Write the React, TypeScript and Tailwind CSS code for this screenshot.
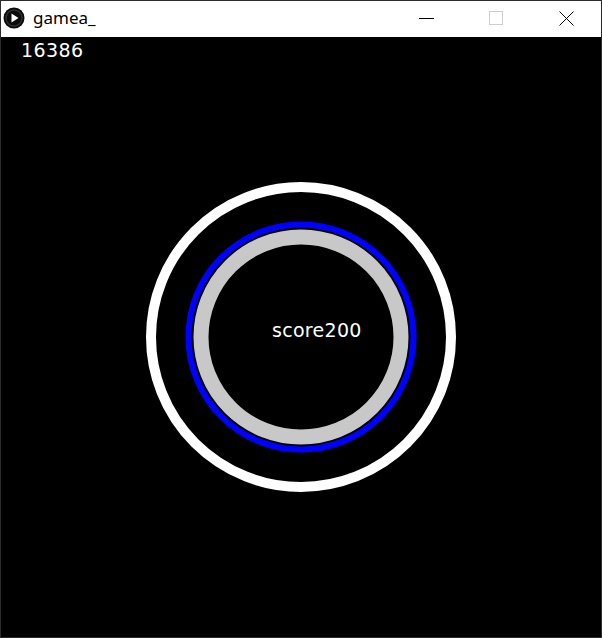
import React from "react";

function ProcessingIcon() {
  return (
    <svg width="22" height="22" viewBox="0 0 22 22">
      <circle cx="11" cy="11" r="10.5" fill="#0a0a0a" />
      <circle cx="11" cy="11" r="8" fill="none" stroke="#2e2e2e" strokeWidth="1.5" />
      <path d="M8.5 6.5 L15.5 11 L8.5 15.5 Z" fill="#ffffff" />
    </svg>
  );
}

function TitleBar() {
  return (
    <div className="flex h-[36px] bg-white items-start">
      <div className="ml-[2px] mt-[6px]">
        <ProcessingIcon />
      </div>
      <span
        className="ml-[8px] mt-[6px] text-[17px] leading-[21px] text-black"
        style={{ fontFamily: '"Noto Sans", "Liberation Sans", sans-serif' }}
      >
        gamea_
      </span>
      <div className="flex-1" />
      <div className="w-[70px] h-full flex justify-center">
        <div className="mt-[17px] w-[15px] h-px bg-black" />
      </div>
      <div className="w-[70px] h-full flex justify-center">
        <div className="mt-[10px] w-[14px] h-[14px] border border-[#cccccc]" />
      </div>
      <div className="w-[70px] h-full flex justify-center">
        <svg className="mt-[10px]" width="15" height="15" viewBox="0 0 15 15">
          <path d="M0.5 0.5 L14.5 14.5 M14.5 0.5 L0.5 14.5" stroke="#000" strokeWidth="1" />
        </svg>
      </div>
    </div>
  );
}

export default function App() {
  const millis = 16386;
  const score = 200;
  const textFont = { fontFamily: '"DejaVu Sans", "Liberation Sans", sans-serif' };

  return (
    <div className="w-[602px] h-[638px] border border-[#2b2b2b] flex flex-col bg-black overflow-hidden">
      <TitleBar />
      <div className="relative w-[600px] h-[600px] bg-black">
        <svg width="600" height="600" viewBox="0 0 600 600" className="block">
          <circle cx="300" cy="300" r="150" fill="none" stroke="#ffffff" strokeWidth="10" />
          <circle cx="300" cy="300" r="112.5" fill="none" stroke="#0000ff" strokeWidth="6" />
          <circle cx="300" cy="300" r="100" fill="none" stroke="#c8c8c8" strokeWidth="15" />
        </svg>
        <span
          className="absolute left-[20px] top-[4px] text-[19px] leading-[19px] tracking-[0.4px] text-white whitespace-nowrap"
          style={textFont}
        >
          {millis}
        </span>
        <span
          className="absolute left-[271px] top-[284px] text-[19px] leading-[19px] tracking-[0.3px] text-white whitespace-nowrap"
          style={textFont}
        >
          score{score}
        </span>
      </div>
    </div>
  );
}
